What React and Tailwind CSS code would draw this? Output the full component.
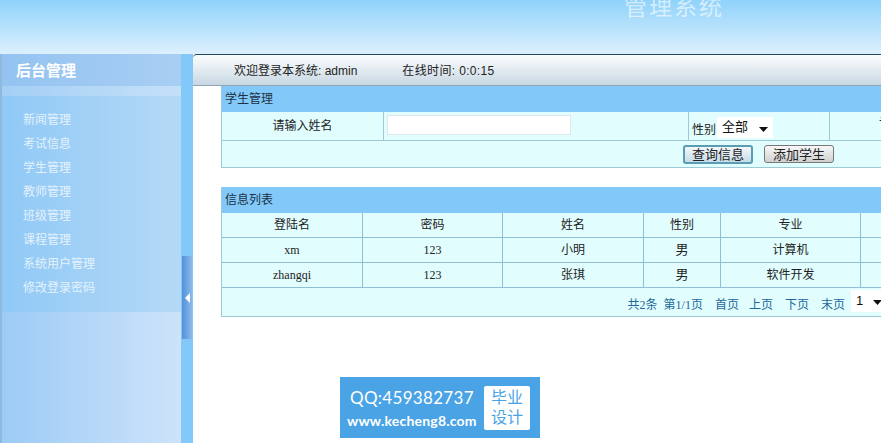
const cjk = "font-['Liberation_Sans','Noto_Sans_CJK_SC',sans-serif]";
const serif = "font-['Liberation_Serif','Noto_Sans_CJK_SC',serif]";
const menu = ["新闻管理", "考试信息", "学生管理", "教师管理", "班级管理", "课程管理", "系统用户管理", "修改登录密码"];
const widths = ["w-[141px]", "w-[140px]", "w-[141px]", "w-[77px]", "w-[140px]", "w-[81px]"];
const rows = [
  ["登陆名", "密码", "姓名", "性别", "专业", ""],
  ["xm", "123", "小明", "男", "计算机", ""],
  ["zhangqi", "123", "张琪", "男", "软件开发", ""],
];

function Arrow({ className }) {
  return (
    <svg className={className} width="9" height="5" viewBox="0 0 9 5">
      <path d="M0 0h9L4.5 5z" fill="#111" />
    </svg>
  );
}

function Select({ value, className }) {
  return (
    <div className={`relative bg-white shrink-0 ${className}`}>
      <select
        defaultValue={value}
        className="w-full h-full appearance-none bg-transparent pl-[5px] text-[13px] text-[#111] outline-none font-['Liberation_Sans','Noto_Sans_CJK_SC',sans-serif]"
      >
        <option>{value}</option>
      </select>
      <Arrow className="absolute right-[5px] top-[10px] pointer-events-none" />
    </div>
  );
}

export default function App() {
  return (
    <div className={`w-[881px] h-[443px] overflow-hidden flex flex-col bg-white text-[12px] text-[#222] ${cjk}`}>
      <header className="h-[54px] shrink-0 bg-gradient-to-b from-[#8fd2fa] to-[#dcf0fd] pl-[624px] overflow-hidden">
        <div className="-mt-[8px] text-[23px] leading-[30px] tracking-[2px] text-white/60">管理系统</div>
      </header>
      <div className="flex flex-1 min-h-0">
        <aside className="w-[181px] shrink-0 flex flex-col border-l-2 border-[#8fb8dc]">
          <div className="h-[32px] pl-[14px] pt-[2px] flex items-center bg-gradient-to-r from-[#94c3f1] to-[#a8cef3] text-[15px] font-bold text-white">后台管理</div>
          <div className="h-[10px] bg-gradient-to-r from-[#a4cff5] to-[#c4e0f8]" />
          <nav className="h-[216px] pt-[12px] pl-[21px] bg-gradient-to-r from-[#90c9f6] to-[#b4d9f6]">
            {menu.map((m) => (
              <div key={m} className="h-[24px] leading-[24px] text-white/75">{m}</div>
            ))}
          </nav>
          <div className="flex-1 bg-gradient-to-r from-[#9ccbf5] to-[#cde3fa]" />
        </aside>
        <div className="w-[12px] shrink-0 bg-[#82c9f9] pt-[202px] pl-px">
          <div className="w-[10px] h-[83px] flex items-center justify-center bg-gradient-to-r from-[#4f93dc] to-[#8db8e8]">
            <svg width="5" height="10" viewBox="0 0 5 10"><path d="M5 0v10L0 5z" fill="#fff" /></svg>
          </div>
        </div>
        <main className="flex-1 min-w-0 flex flex-col overflow-hidden">
          <div className="h-[32px] shrink-0 flex items-center pl-[41px] pt-[2px] border-t border-[#1d4a60] border-b border-b-[#8ea4b2] bg-gradient-to-b from-[#fcfefe] to-[#c8d7e3] rounded-tl-[4px] text-[#222]">
            <span>欢迎登录本系统: admin</span>
            <span className="ml-[45px] tracking-[0.35px]">在线时间: 0:0:15</span>
          </div>
          <div className="pl-[28px]">
            <section className="w-[720px] border-l border-b border-[#9cc9d4] bg-[#e1fdfe]">
              <div className="h-[26px] pl-[3px] leading-[26px] bg-[#82c9f9] text-[#1c3244]">学生管理</div>
              <div className="h-[29px] flex border-b border-[#9cc9d4]">
                <div className="w-[162px] flex items-center justify-center border-r border-[#9cc9d4]">请输入姓名</div>
                <div className="w-[305px] pl-[3px] pt-[3px] border-r border-[#9cc9d4]">
                  <input className="w-[184px] h-[20px] bg-white border border-[#dde8ea] outline-none" />
                </div>
                <div className="w-[141px] flex items-center pl-[3px] pt-[2px] border-r border-[#9cc9d4]">
                  <span className="pt-[5px]">性别</span>
                  <Select value="全部" className="ml-px w-[56px] h-[21px]" />
                </div>
                <div className="flex-1 pl-[49px] pt-[2px]">专业</div>
              </div>
              <div className="h-[26px] flex items-center pl-[461px]">
                <button className="w-[70px] h-[19px] rounded-[3px] border-2 border-[#5b9cb5] bg-gradient-to-b from-[#f4f8fa] to-[#c6dbe8] text-[13px] leading-none text-[#222]">查询信息</button>
                <button className="ml-[11px] w-[70px] h-[18px] rounded-[3px] border border-[#777] bg-gradient-to-b from-[#f8f8f8] to-[#d0d0d0] text-[13px] leading-none text-[#222]">添加学生</button>
              </div>
            </section>
            <section className="mt-[19px] w-[720px] border-l border-b border-[#9cc9d4] bg-[#e1fdfe]">
              <div className="h-[26px] pl-[3px] leading-[26px] bg-[#82c9f9] text-[#1c3244]">信息列表</div>
              {rows.map((r, i) => (
                <div key={i} className="h-[25px] flex border-b border-[#8fbfd0]">
                  {r.map((c, j) => (
                    <div
                      key={j}
                      className={`${widths[j]} h-full shrink-0 flex items-center justify-center border-r border-[#8fbfd0] ${i > 0 && j < 2 ? serif : ""} ${j === 3 && i > 0 ? "text-[13px]" : ""}`}
                    >
                      {c}
                    </div>
                  ))}
                </div>
              ))}
              <div className={`h-[28px] flex items-center justify-end pr-[54px] text-[#23689a] ${serif}`}>
                <div className="pt-[6px] flex">
                  <span>共2条</span>
                  <span className="ml-[6px]">第1/1页</span>
                  <span className="ml-[12px]">首页</span>
                  <span className="ml-[10px]">上页</span>
                  <span className="ml-[12px]">下页</span>
                  <span className="ml-[12px]">末页</span>
                </div>
                <Select value="1" className="ml-[6px] mb-[2px] w-[36px] h-[22px]" />
              </div>
            </section>
            <div className="mt-[60px] ml-[119px] w-[200px] h-[61px] bg-[#4aa3e5] flex items-center pl-[7px]">
              <div className="w-[137px] pt-[2px] text-white font-['Lato','Liberation_Sans',sans-serif]">
                <div className="pl-[3px] text-[17px] leading-[24px] tracking-[0.3px]">QQ:459382737</div>
                <div className="mt-px text-[14px] leading-[20px] font-bold tracking-[0.2px]">www.kecheng8.com</div>
              </div>
              <div className="w-[46px] h-[44px] rounded-[2px] bg-white text-[#4aa3e5] text-[16px] leading-[20px] text-center pt-[2px]">毕业<br />设计</div>
            </div>
          </div>
        </main>
      </div>
    </div>
  );
}
